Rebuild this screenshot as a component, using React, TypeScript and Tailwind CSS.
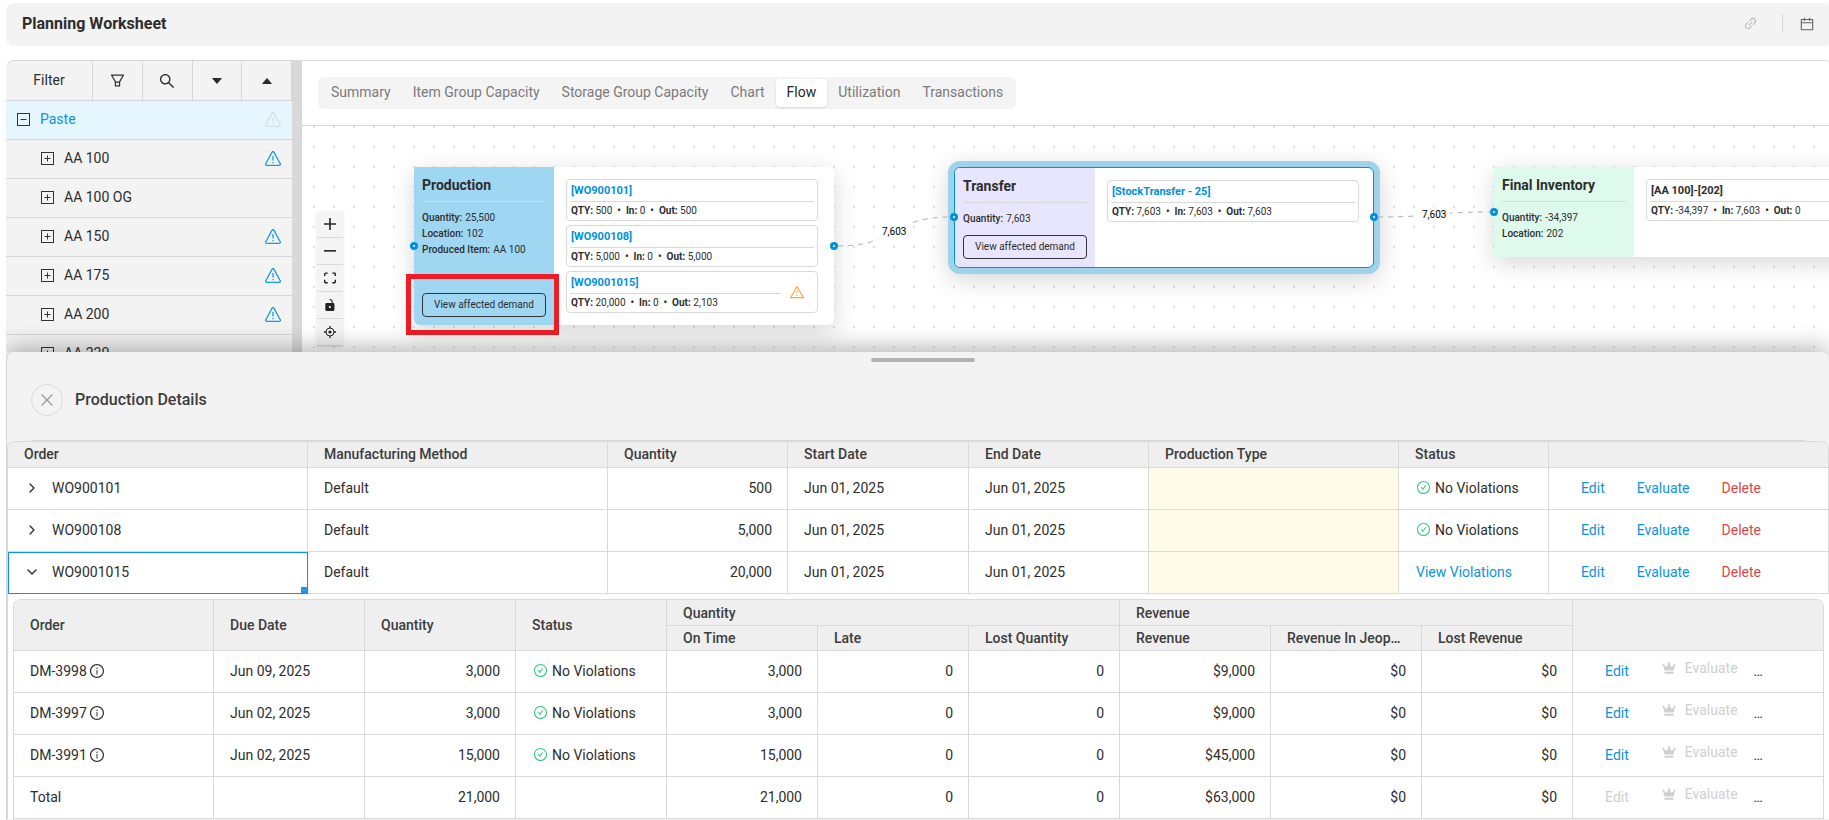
import React from "react";
import {
  AiOutlineFilter,
  AiOutlineSearch,
  AiFillCaretDown,
  AiFillCaretUp,
  AiOutlineLink,
  AiOutlineCalendar,
  AiOutlineWarning,
  AiOutlineInfoCircle,
  AiOutlineCheckCircle,
} from "react-icons/ai";
import { ChevronDown, ChevronRight, X } from "lucide-react";

const treeItems = [
  { label: "AA 100", alert: true },
  { label: "AA 100 OG", alert: false },
  { label: "AA 150", alert: true },
  { label: "AA 175", alert: true },
  { label: "AA 200", alert: true },
  { label: "AA 220", alert: false },
];

const tabs = [
  "Summary",
  "Item Group Capacity",
  "Storage Group Capacity",
  "Chart",
  "Flow",
  "Utilization",
  "Transactions",
];

const orders = [
  { id: "WO900101", qty: "500", ok: true, open: false },
  { id: "WO900108", qty: "5,000", ok: true, open: false },
  { id: "WO9001015", qty: "20,000", ok: false, open: true },
];

const demands = [
  { id: "DM-3998", due: "Jun 09, 2025", qty: "3,000", revenue: "$9,000" },
  { id: "DM-3997", due: "Jun 02, 2025", qty: "3,000", revenue: "$9,000" },
  { id: "DM-3991", due: "Jun 02, 2025", qty: "15,000", revenue: "$45,000" },
  { id: "Total", due: "", qty: "21,000", revenue: "$63,000" },
];

function AlertTriangle({ className }: { className: string }) {
  return (
    <svg viewBox="0 0 16 15" className={`w-4 h-[15px] ${className}`} fill="none" stroke="currentColor">
      <path d="M7.1 1.1a1 1 0 0 1 1.8 0l6.3 11.6a1 1 0 0 1-.9 1.6H1.7a1 1 0 0 1-.9-1.6z" strokeWidth="1.3" />
      <path d="M8 5v4.6M8 11v1.3" strokeWidth="1.3" />
    </svg>
  );
}

function TreeBox({ open }: { open?: boolean }) {
  return (
    <svg viewBox="0 0 13 13" className="w-[13px] h-[13px] text-[#333]" fill="none" stroke="currentColor">
      <rect x="0.5" y="0.5" width="12" height="12" />
      <path d={open ? "M3.5 6.5h6" : "M3.5 6.5h6M6.5 3.5v6"} />
    </svg>
  );
}

function Crown() {
  return (
    <svg viewBox="0 0 14 12" className="w-3.5 h-3" fill="currentColor">
      <path d="M2.400 8.600 1.200 3.600a1 1 0 1 1 .9-.3L4.500 5 6.300 1.900a1 1 0 1 1 1.400 0L9.500 5l2.400-1.700a1 1 0 1 1 .9.3L11.600 8.600zM2.400 9.800h9.200v1.200a.8.8 0 0 1-.8.8H3.200a.8.8 0 0 1-.8-.8z" />
    </svg>
  );
}

function Sidebar() {
  const iconButton =
    "flex-1 flex items-center justify-center border-r border-[#d6d6d6]";
  return (
    <aside className="w-[286px] shrink-0 bg-[#f3f3f3] rounded-tl-lg border-t border-[#d6d6d6] overflow-hidden">
      <div className="flex h-10 border-b border-[#d6d6d6]">
        <button className="w-[87px] pb-0.5 border-r border-[#d6d6d6]">Filter</button>
        <button className={iconButton} aria-label="Filter list"><AiOutlineFilter size={17} /></button>
        <button className={iconButton} aria-label="Search"><AiOutlineSearch size={18} /></button>
        <button className={iconButton} aria-label="Expand all"><AiFillCaretDown size={14} /></button>
        <button className={iconButton} aria-label="Collapse all"><AiFillCaretUp size={14} /></button>
      </div>
      <div className="flex items-center h-[39px] pl-[11px] pr-[11px] pb-0.5 bg-[#e6f6fe] border-b border-[#d6d6d6]">
        <TreeBox open />
        <span className="ml-[10px] text-[#0c93dc]">Paste</span>
        <AlertTriangle className="ml-auto text-[#d6dce0]" />
      </div>
      {treeItems.map((item) => (
        <div key={item.label} className="flex items-center h-[39px] pl-[35px] pr-[11px] pb-0.5 border-b border-[#d6d6d6]">
          <TreeBox />
          <span className="ml-[10px]">{item.label}</span>
          {item.alert && <AlertTriangle className="ml-auto text-[#1a9be0]" />}
        </div>
      ))}
    </aside>
  );
}

interface OrderCardProps {
  title: string;
  qty: string;
  inQty: string;
  outQty: string;
  link?: boolean;
  warning?: boolean;
}

function OrderCard({ title, qty, inQty, outQty, link = true, warning }: OrderCardProps) {
  return (
    <div className="flex items-center w-[252px] h-[42px] px-[3px] rounded-sm border border-[#d9d9d9]">
      <div className="flex-1">
        <div className="h-[22px] pl-px leading-[22px] text-[11px] font-bold border-b border-[#d9d9d9]">
          {link ? <a href="#" className="text-[#0090dc]">{title}</a> : title}
        </div>
        <div className="h-[18px] pl-px leading-[18px] text-[10px] whitespace-pre">
          <b>QTY:</b> {qty}  <b>•</b>  <b>In:</b> {inQty}  <b>•</b>  <b>Out:</b> {outQty}
        </div>
      </div>
      {warning && <AiOutlineWarning size={16} className="ml-2 mr-[9px] text-[#faa640]" />}
    </div>
  );
}

interface FlowNodeProps {
  title: string;
  facts: [string, string][];
  place: string;
  tint: string;
  action?: boolean;
  children: React.ReactNode;
}

function FlowNode({ title, facts, place, tint, action, children }: FlowNodeProps) {
  return (
    <div className={`absolute flex w-[420px] bg-white rounded-md ${place}`}>
      <div className={`w-[140px] shrink-0 flex flex-col px-2 pb-2 rounded-bl-md ${tint}`}>
        <h3 className="h-[35px] pt-2 leading-5 text-[14px] font-bold border-b border-[#d9d9d9]">{title}</h3>
        <dl className="pt-2 text-[10px] leading-4">
          {facts.map(([name, value]) => (
            <div key={name} className="flex gap-[3px] whitespace-nowrap">
              <dt className="font-medium">{name}:</dt>
              <dd>{value}</dd>
            </div>
          ))}
        </dl>
        {action && (
          <button className="mt-auto h-6 rounded border border-[#333] text-[10px]">
            View affected demand
          </button>
        )}
      </div>
      <div className="flex-1 flex flex-col gap-1 pt-3 pl-3">{children}</div>
    </div>
  );
}

function Handle({ place }: { place: string }) {
  return <span className={`absolute w-2 h-2 rounded-full bg-white border-[3px] border-[#0090dc] ${place}`} />;
}

function Controls() {
  const button = "flex items-center justify-center w-[26px] h-[27px] border-b border-[#dadada]";
  return (
    <div className="absolute left-[15px] top-[85px] bg-[#f4f4f4] text-[#222] shadow">
      <button className={button} aria-label="Zoom in">
        <svg viewBox="0 0 32 32" className="w-3 h-3" fill="currentColor">
          <path d="M32 18.133H18.133V32h-4.266V18.133H0v-4.266h13.867V0h4.266v13.867H32z" />
        </svg>
      </button>
      <button className={button} aria-label="Zoom out">
        <svg viewBox="0 0 32 5" className="w-3 h-0.5" fill="currentColor">
          <path d="M0 0h32v4.2H0z" />
        </svg>
      </button>
      <button className={button} aria-label="Fit view">
        <svg viewBox="0 0 32 30" className="w-3 h-3" fill="currentColor">
          <path d="M3.692 4.63c0-.53.4-.938.939-.938h5.215V0H4.708C2.13 0 0 2.054 0 4.63v5.216h3.692V4.631zM27.354 0h-5.2v3.692h5.17c.53 0 .984.4.984.939v5.215H32V4.631A4.624 4.624 0 0027.354 0zm.954 24.83c0 .532-.4.94-.939.94h-5.215v3.768h5.215c2.577 0 4.631-2.13 4.631-4.707v-5.139h-3.692v5.139zm-23.677.94c-.531 0-.939-.4-.939-.94v-5.138H0v5.139c0 2.577 2.13 4.707 4.708 4.707h5.138V25.77H4.631z" />
        </svg>
      </button>
      <button className={button} aria-label="Toggle interactivity">
        <svg viewBox="0 0 25 32" className="w-3 h-3" fill="currentColor">
          <path d="M21.333 10.667H19.81V7.619C19.81 3.429 16.38 0 12.19 0c-4.114 1.828-1.37 2.133.305 2.438 1.676.305 4.42 2.59 4.42 5.181v3.048H3.047A3.056 3.056 0 000 13.714v15.238A3.056 3.056 0 003.048 32h18.285a3.056 3.056 0 003.048-3.048V13.714a3.056 3.056 0 00-3.048-3.047zM12.19 24.533a3.056 3.056 0 01-3.047-3.047 3.056 3.056 0 013.047-3.048 3.056 3.056 0 013.048 3.048 3.056 3.056 0 01-3.048 3.047z" />
        </svg>
      </button>
      <button className={button} aria-label="Center on node">
        <svg viewBox="0 0 12 12" className="w-3 h-3" fill="none" stroke="currentColor">
          <circle cx="6" cy="6" r="4" />
          <circle cx="6" cy="6" r="1.6" fill="currentColor" stroke="none" />
          <path d="M6 0v2M6 10v2M0 6h2M10 6h2" strokeWidth="1.3" />
        </svg>
      </button>
    </div>
  );
}

// Node coordinates are relative to the canvas' top left corner
function FlowCanvas() {
  const nodeShadow = "shadow-[0_6px_24px_rgba(0,0,0,0.16)]";
  return (
    <div className="relative flex-1 overflow-hidden">
      <svg className="absolute inset-0 w-full h-full">
        <pattern id="dots" width="20" height="20" x="2" y="11" patternUnits="userSpaceOnUse">
          <circle cx="10" cy="10" r="0.9" fill="#d2d2d6" />
        </pattern>
        <rect width="100%" height="100%" fill="url(#dots)" />
      </svg>

      <FlowNode
        title="Production"
        place={`left-[112px] top-[41px] h-[158px] ${nodeShadow}`}
        tint="bg-[#9fd6f2]"
        facts={[["Quantity", "25,500"], ["Location", "102"], ["Produced Item", "AA 100"]]}
        action
      >
        <OrderCard title="[WO900101]" qty="500" inQty="0" outQty="500" />
        <OrderCard title="[WO900108]" qty="5,000" inQty="0" outQty="5,000" />
        <OrderCard title="[WO9001015]" qty="20,000" inQty="0" outQty="2,103" warning />
      </FlowNode>
      <FlowNode
        title="Transfer"
        place="left-[652px] top-[41px] h-[101px] border border-[#0090dc] overflow-hidden shadow-[0_0_0_6px_#9fd3ec,0_6px_24px_6px_rgba(0,0,0,0.16)]"
        tint="bg-[#e8e5fe]"
        facts={[["Quantity", "7,603"]]}
        action
      >
        <OrderCard title="[StockTransfer - 25]" qty="7,603" inQty="7,603" outQty="7,603" />
      </FlowNode>
      <FlowNode
        title="Final Inventory"
        place={`left-[1192px] top-[41px] h-[90px] ${nodeShadow}`}
        tint="bg-[#defaec]"
        facts={[["Quantity", "-34,397"], ["Location", "202"]]}
      >
        <OrderCard title="[AA 100]-[202]" qty="-34,397" inQty="7,603" outQty="0" link={false} />
      </FlowNode>

      <svg className="absolute inset-0 w-full h-full" fill="none" stroke="#b1b1b7" strokeDasharray="5">
        <path d="M536 120C596 120 588 91 648 91" />
        <path d="M1076 91C1132 91 1132 86 1188 86" />
      </svg>
      <span className="absolute left-[576px] top-[98px] px-1 bg-white text-black text-[10px] leading-4">7,603</span>
      <span className="absolute left-[1116px] top-[81px] px-1 bg-white text-black text-[10px] leading-4">7,603</span>

      <Handle place="left-[108px] top-[116px]" />
      <Handle place="left-[528px] top-[116px]" />
      <Handle place="left-[648px] top-[87px]" />
      <Handle place="left-[1068px] top-[87px]" />
      <Handle place="left-[1188px] top-[82px]" />

      <div className="absolute left-[104px] top-[148px] w-[153px] h-[61px] border-[5px] border-[#ee1c25]" />
      <Controls />
    </div>
  );
}

function NoViolations() {
  return (
    <span className="flex items-center gap-1 pl-px">
      <AiOutlineCheckCircle size={15} className="text-[#3dc584]" />
      No Violations
    </span>
  );
}

const th = "px-4 text-left font-medium text-[#3c3c3c] bg-[#efefef] border-r border-b border-[#d9d9d9] truncate";
const td = "h-[42px] pl-4 pr-[15px] pb-0.5 border-r border-b border-[#d9d9d9]";

function DemandTable() {
  return (
    <div className="rounded-t-lg border border-b-0 border-[#d9d9d9] overflow-hidden">
      <table className="w-full table-fixed border-separate border-spacing-0">
        <colgroup>
          <col className="w-[200px]" />
          {Array.from({ length: 9 }, (_, i) => (
            <col key={i} className="w-[151px]" />
          ))}
          <col />
        </colgroup>
        <thead>
          <tr className="h-[26px]">
            <th rowSpan={2} className={th}>Order</th>
            <th rowSpan={2} className={th}>Due Date</th>
            <th rowSpan={2} className={th}>Quantity</th>
            <th rowSpan={2} className={th}>Status</th>
            <th colSpan={3} className={th}>Quantity</th>
            <th colSpan={3} className={th}>Revenue</th>
            <th rowSpan={2} className={`${th} border-r-0`} />
          </tr>
          <tr className="h-[25px]">
            <th className={th}>On Time</th>
            <th className={th}>Late</th>
            <th className={th}>Lost Quantity</th>
            <th className={th}>Revenue</th>
            <th className={th}>Revenue In Jeopardy</th>
            <th className={th}>Lost Revenue</th>
          </tr>
        </thead>
        <tbody>
          {demands.map((row) => {
            const total = row.id === "Total";
            return (
              <tr key={row.id}>
                <td className={td}>
                  <span className="flex items-center gap-0.5">
                    {row.id}
                    {!total && <AiOutlineInfoCircle size={16} />}
                  </span>
                </td>
                <td className={td}>{row.due}</td>
                <td className={`${td} text-right`}>{row.qty}</td>
                <td className={td}>{!total && <NoViolations />}</td>
                <td className={`${td} text-right`}>{row.qty}</td>
                <td className={`${td} text-right`}>0</td>
                <td className={`${td} text-right`}>0</td>
                <td className={`${td} text-right`}>{row.revenue}</td>
                <td className={`${td} text-right`}>$0</td>
                <td className={`${td} text-right`}>$0</td>
                <td className="h-[42px] pl-8 pb-0.5 border-b border-[#d9d9d9]">
                  <div className="flex items-center">
                    <button className={total ? "text-[#cfcfcf]" : "text-[#0c93dc]"} disabled={total}>Edit</button>
                    <button className="flex items-center gap-[9px] ml-[33px] pb-1.5 text-[#cfcfcf]" disabled>
                      <Crown />
                      Evaluate
                    </button>
                    <button className="ml-4" aria-label="More actions">…</button>
                  </div>
                </td>
              </tr>
            );
          })}
        </tbody>
      </table>
    </div>
  );
}

function OrderTable() {
  return (
    <div className="bg-white rounded-t-lg border border-b-0 border-r-0 border-[#d9d9d9] overflow-hidden">
      <table className="w-full table-fixed border-separate border-spacing-0">
        <colgroup>
          <col className="w-[300px]" />
          <col className="w-[300px]" />
          <col className="w-[180px]" />
          <col className="w-[181px]" />
          <col className="w-[180px]" />
          <col className="w-[250px]" />
          <col className="w-[150px]" />
          <col />
        </colgroup>
        <thead>
          <tr className="h-[26px]">
            <th className={`${th} pb-0.5`}>Order</th>
            <th className={`${th} pb-0.5`}>Manufacturing Method</th>
            <th className={`${th} pb-0.5`}>Quantity</th>
            <th className={`${th} pb-0.5`}>Start Date</th>
            <th className={`${th} pb-0.5`}>End Date</th>
            <th className={`${th} pb-0.5`}>Production Type</th>
            <th className={`${th} pb-0.5`}>Status</th>
            <th className={th} />
          </tr>
        </thead>
        <tbody>
          {orders.map((order) => (
            <tr key={order.id}>
              <td className={order.open ? `${td} relative outline outline-[#0c93dc] -outline-offset-1` : td}>
                <button className="flex items-center gap-3">
                  {order.open ? <ChevronDown size={16} /> : <ChevronRight size={16} />}
                  {order.id}
                </button>
                {order.open && <span className="absolute right-0 bottom-0 w-1.5 h-1.5 bg-[#2196f3]" />}
              </td>
              <td className={td}>Default</td>
              <td className={`${td} text-right`}>{order.qty}</td>
              <td className={td}>Jun 01, 2025</td>
              <td className={td}>Jun 01, 2025</td>
              <td className={`${td} bg-[#fefbe8]`} />
              <td className={td}>
                {order.ok ? <NoViolations /> : <a href="#" className="pl-px text-[#0c93dc]">View Violations</a>}
              </td>
              <td className={td}>
                <div className="flex gap-8 pl-4 text-[#0c93dc]">
                  <button>Edit</button>
                  <button>Evaluate</button>
                  <button className="text-[#d9484c]">Delete</button>
                </div>
              </td>
            </tr>
          ))}
          <tr>
            <td colSpan={8} className="pt-[5px] pl-[5px] pr-[5px]">
              <DemandTable />
            </td>
          </tr>
        </tbody>
      </table>
    </div>
  );
}

export default function App() {
  return (
    <div className="flex flex-col h-screen ml-1.5 overflow-hidden bg-white text-[14px] leading-5 text-[#2d2d2d] font-['Roboto',sans-serif]">
      <header className="flex items-center shrink-0 h-[43px] mt-[3px] pl-4 pr-[14px] pb-0.5 bg-[#f3f3f3] rounded-l-lg rounded-r-sm">
        <h1 className="text-[16px] font-bold">Planning Worksheet</h1>
        <button className="ml-auto text-[#b8b8b8]" aria-label="Copy link"><AiOutlineLink size={15} /></button>
        <span className="w-px h-[19px] ml-6 mr-4 bg-[#d6d6d6]" />
        <button className="text-[#666]" aria-label="Calendar"><AiOutlineCalendar size={16} /></button>
      </header>

      <div className="flex flex-1 min-h-0 mt-[14px]">
        <Sidebar />
        <div className="w-2.5 shrink-0 bg-[#d9d9d9]" />
        <main className="flex-1 flex flex-col min-w-0 border-t border-[#d6d6d6] rounded-tr">
          <div className="h-[65px] shrink-0 pt-4 pl-4 border-b border-[#d6d6d6]">
            <nav className="inline-flex p-0.5 rounded-md bg-[#f4f4f4]">
              {tabs.map((tab) => (
                <button
                  key={tab}
                  className={
                    tab === "Flow"
                      ? "h-7 px-[11px] pb-0.5 rounded bg-white text-[#262626] shadow-sm"
                      : "h-7 px-[11px] pb-0.5 text-[#7a7a7a]"
                  }
                >
                  {tab}
                </button>
              ))}
            </nav>
          </div>
          <FlowCanvas />
        </main>
      </div>

      <section className="relative shrink-0 pb-px bg-[#f3f3f3] rounded-t-lg border-l border-[#d2d2d2] shadow-[0_-4px_24px_rgba(0,0,0,0.3)]">
        <div className="flex justify-center pt-1.5 pl-2.5">
          <div className="w-[104px] h-1 rounded-full bg-[#b3b3b3]" />
        </div>
        <div className="flex items-center gap-3 mt-[22px] pb-6 pl-6">
          <button className="flex items-center justify-center w-8 h-8 rounded-full border border-[#d9d9d9] text-[#999]" aria-label="Close">
            <X size={20} strokeWidth={1.5} />
          </button>
          <h2 className="text-[16px] font-medium text-[#3c3c3c]">Production Details</h2>
        </div>
        <div className="h-px mx-6 bg-[#d9d9d9]" />
        <OrderTable />
      </section>
    </div>
  );
}
